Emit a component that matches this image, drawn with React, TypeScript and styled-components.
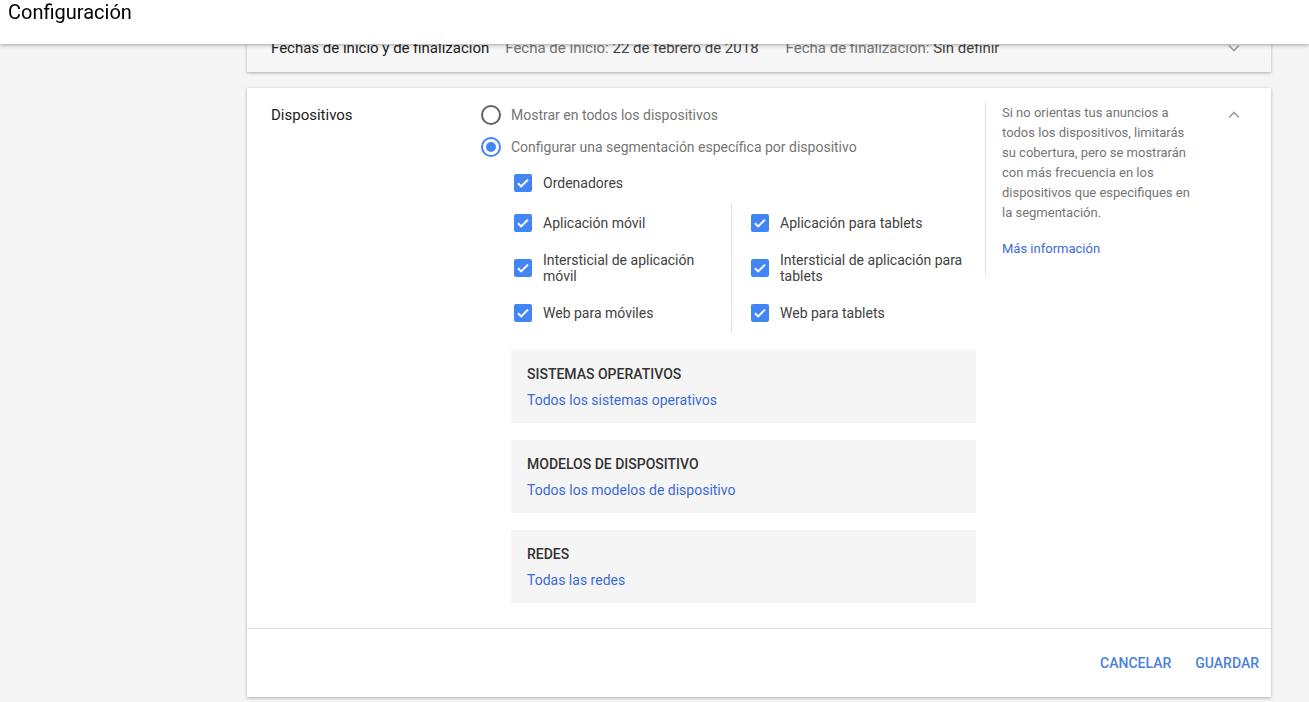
import React from "react";
import styled, { createGlobalStyle } from "styled-components";

const GlobalStyle = createGlobalStyle`
  body {
    margin: 0;
    background: #f5f5f5;
    font-family: Roboto, "Liberation Sans", Arial, sans-serif;
    color: #212121;
  }
`;

const Header = styled.header`
  position: fixed;
  top: 0;
  left: 0;
  right: 0;
  height: 44px;
  background: #fff;
  box-shadow: 0 1px 4px rgba(0, 0, 0, 0.35);
  z-index: 10;
`;

const Title = styled.h1`
  margin: 0;
  padding: 0 8px;
  font-size: 20px;
  line-height: 24px;
  font-weight: 400;
  color: #000;
`;

const Main = styled.main`
  padding: 24px 0 24px 247px;
  display: flex;
  flex-direction: column;
  gap: 16px;
`;

const Card = styled.section<{ $collapsed?: boolean }>`
  width: 1024px;
  background: ${(p) => (p.$collapsed ? "#f7f7f7" : "#fff")};
  box-shadow: 0 1px 3px rgba(0, 0, 0, 0.3);
`;

const SummaryRow = styled.div`
  height: 48px;
  padding: 0 25px 0 24px;
  display: flex;
  align-items: center;
  font-size: 15px;
`;

const SummaryTitle = styled.span`
  color: #212121;
  margin-right: 16px;
`;

const SummaryItem = styled.span`
  color: #757575;
  margin-right: 27px;
  b {
    font-weight: 400;
    color: #424242;
  }
`;

const Spacer = styled.div`
  flex: 1;
`;

const Body = styled.div`
  display: flex;
  align-items: flex-start;
  padding: 15px 25px 25px 24px;
`;

const SectionLabel = styled.div`
  width: 210px;
  font-size: 15px;
  line-height: 24px;
  color: #212121;
`;

const Options = styled.div`
  width: 495px;
  display: flex;
  flex-direction: column;
`;

const RadioRow = styled.label`
  display: flex;
  align-items: center;
  height: 24px;
  margin-bottom: 8px;
  font-size: 14px;
  color: #757575;
`;

const RadioCircle = styled.span<{ $on?: boolean }>`
  width: 20px;
  height: 20px;
  box-sizing: border-box;
  border-radius: 50%;
  border: 2px solid ${(p) => (p.$on ? "#4285f4" : "#616161")};
  margin-right: 10px;
  display: flex;
  align-items: center;
  justify-content: center;
  &::after {
    content: "";
    width: 10px;
    height: 10px;
    border-radius: 50%;
    background: ${(p) => (p.$on ? "#4285f4" : "transparent")};
  }
`;

const SubBlock = styled.div`
  margin-left: 30px;
  margin-top: -4px;
  display: flex;
  flex-direction: column;
`;

const CheckRow = styled.label`
  display: flex;
  align-items: center;
  min-height: 40px;
  font-size: 14px;
  line-height: 16px;
  color: #424242;
`;

const CheckBox = styled.span`
  flex: none;
  width: 24px;
  height: 24px;
  margin-right: 8px;
  display: flex;
  align-items: center;
  justify-content: center;
`;

const Columns = styled.div`
  display: flex;
`;

const Column = styled.div<{ $right?: boolean }>`
  display: flex;
  flex-direction: column;
  gap: 5px;
  width: ${(p) => (p.$right ? "245px" : "220px")};
  box-sizing: border-box;
  padding: ${(p) => (p.$right ? "0 0 0 16px" : "0 16px 0 0")};
  border-left: ${(p) => (p.$right ? "1px solid #e0e0e0" : "none")};
`;

const FilterBox = styled.div`
  background: #f5f5f5;
  padding: 16px 16px 15px;
  margin-top: 17px;
`;

const FilterTitle = styled.div`
  font-size: 14px;
  line-height: 16px;
  font-weight: 500;
  color: #333;
  text-transform: uppercase;
  margin-bottom: 10px;
`;

const Link = styled.a`
  display: block;
  font-size: 14px;
  line-height: 16px;
  color: #3b6bd6;
  text-decoration: none;
  cursor: pointer;
`;

const Help = styled.aside`
  margin-left: 9px;
  width: 196px;
  padding: 0 0 16px 16px;
  border-left: 1px solid #e0e0e0;
  font-size: 13px;
  line-height: 20px;
  color: #757575;
  p {
    margin: 0 0 16px;
  }
`;

const HelpLink = styled(Link)`
  font-size: 13px;
  line-height: 20px;
`;

const Chevron = styled.svg`
  width: 24px;
  height: 24px;
  flex: none;
`;

const Footer = styled.div`
  border-top: 1px solid #e0e0e0;
  height: 68px;
  padding-right: 4px;
  display: flex;
  justify-content: flex-end;
  align-items: center;
`;

const TextButton = styled.button`
  border: 0;
  background: transparent;
  font-family: inherit;
  font-size: 14px;
  font-weight: 500;
  color: #4a7fe0;
  text-transform: uppercase;
  padding: 8px;
  margin-left: 8px;
  cursor: pointer;
`;

function Check() {
  return (
    <CheckBox>
      <svg width="18" height="18" viewBox="0 0 18 18">
        <rect width="18" height="18" rx="2" fill="#4285f4" />
        <path d="M4 9.2l3.2 3.2L14 5.6" stroke="#fff" strokeWidth="2" fill="none" />
      </svg>
    </CheckBox>
  );
}

function ChevronIcon({ up }: { up?: boolean }) {
  return (
    <Chevron viewBox="0 0 24 24">
      <path
        d={up ? "M7 14.5l5-5 5 5" : "M7 9.5l5 5 5-5"}
        stroke="#9e9e9e"
        strokeWidth="1.6"
        fill="none"
      />
    </Chevron>
  );
}

const leftDevices = ["Aplicación móvil", "Intersticial de aplicación móvil", "Web para móviles"];
const rightDevices = ["Aplicación para tablets", "Intersticial de aplicación para tablets", "Web para tablets"];

const filters = [
  { title: "Sistemas operativos", link: "Todos los sistemas operativos" },
  { title: "Modelos de dispositivo", link: "Todos los modelos de dispositivo" },
  { title: "Redes", link: "Todas las redes" },
];

export default function App() {
  return (
    <>
      <GlobalStyle />
      <Header>
        <Title>Configuración</Title>
      </Header>
      <Main>
        <Card $collapsed>
          <SummaryRow>
            <SummaryTitle>Fechas de inicio y de finalización</SummaryTitle>
            <SummaryItem>
              Fecha de inicio: <b>22 de febrero de 2018</b>
            </SummaryItem>
            <SummaryItem>
              Fecha de finalización: <b>Sin definir</b>
            </SummaryItem>
            <Spacer />
            <ChevronIcon />
          </SummaryRow>
        </Card>

        <Card>
          <Body>
            <SectionLabel>Dispositivos</SectionLabel>
            <Options>
              <RadioRow>
                <RadioCircle />
                Mostrar en todos los dispositivos
              </RadioRow>
              <RadioRow>
                <RadioCircle $on />
                Configurar una segmentación específica por dispositivo
              </RadioRow>
              <SubBlock>
                <CheckRow>
                  <Check />
                  Ordenadores
                </CheckRow>
                <Columns>
                  <Column>
                    {leftDevices.map((d) => (
                      <CheckRow key={d}>
                        <Check />
                        {d}
                      </CheckRow>
                    ))}
                  </Column>
                  <Column $right>
                    {rightDevices.map((d) => (
                      <CheckRow key={d}>
                        <Check />
                        {d}
                      </CheckRow>
                    ))}
                  </Column>
                </Columns>
                {filters.map((f) => (
                  <FilterBox key={f.title}>
                    <FilterTitle>{f.title}</FilterTitle>
                    <Link>{f.link}</Link>
                  </FilterBox>
                ))}
              </SubBlock>
            </Options>
            <Help>
              <p>
                Si no orientas tus anuncios a todos los dispositivos, limitarás su cobertura, pero se
                mostrarán con más frecuencia en los dispositivos que especifiques en la segmentación.
              </p>
              <HelpLink>Más información</HelpLink>
            </Help>
            <Spacer />
            <ChevronIcon up />
          </Body>
          <Footer>
            <TextButton>Cancelar</TextButton>
            <TextButton>Guardar</TextButton>
          </Footer>
        </Card>
      </Main>
    </>
  );
}
